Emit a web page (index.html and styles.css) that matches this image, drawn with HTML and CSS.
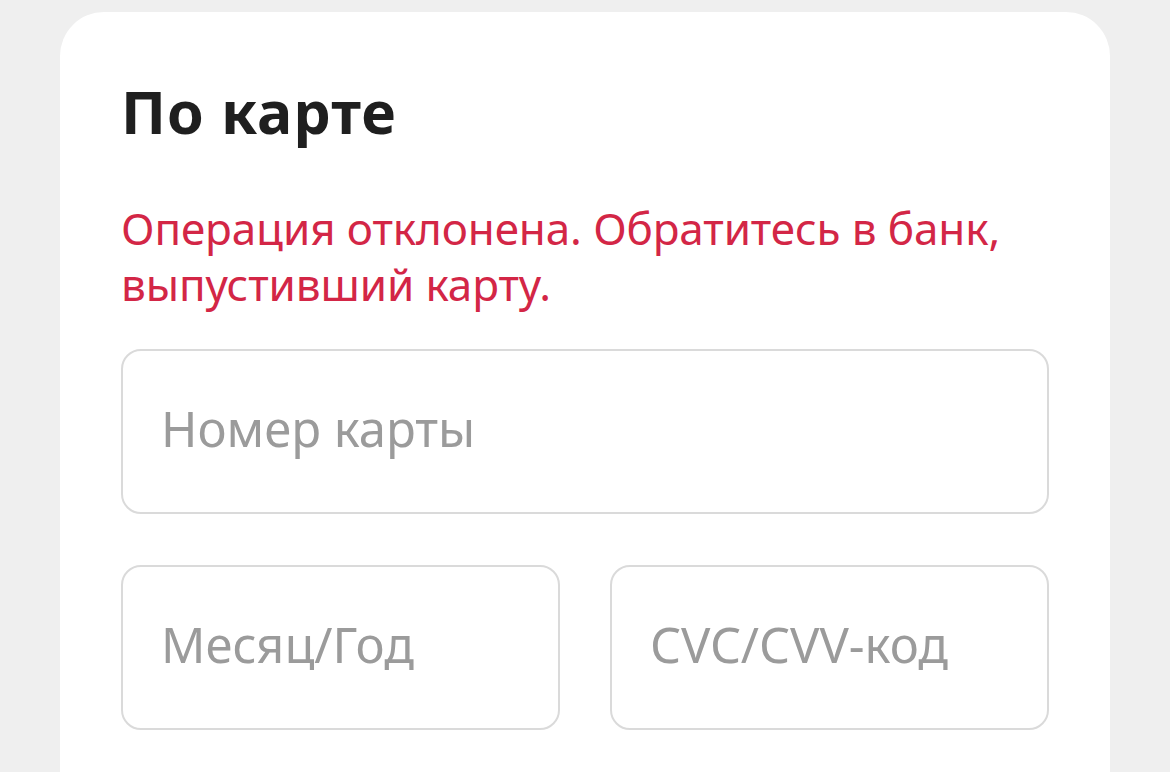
FILE: index.html
```html
<!DOCTYPE html>
<html lang="ru">
<head>
<meta charset="utf-8">
<link rel="stylesheet" href="styles.css">
</head>
<body>
<div class="card">
  <h1 class="title">По карте</h1>
  <p class="error">Операция отклонена. Обратитесь в банк, выпустивший карту.</p>
  <div class="field field-full"><span class="ph">Номер карты</span></div>
  <div class="row">
    <div class="field"><span class="ph">Месяц/Год</span></div>
    <div class="field"><span class="ph">CVC/CVV-код</span></div>
  </div>
</div>
</body>
</html>
```
FILE: styles.css
```css
html, body {
  margin: 0;
  padding: 0;
  background: #efefef;
  height: 100%;
  overflow: hidden;
}
body {
  font-family: "Noto Sans", "Open Sans", sans-serif;
}
.card {
  margin: 12px 0 0 60px;
  width: 1050px;
  box-sizing: border-box;
  height: 900px;
  background: #fff;
  border-radius: 44px;
  padding: 64px 61px 0 61px;
}
.title {
  margin: 0;
  font-size: 59px;
  line-height: 70px;
  font-weight: 700;
  letter-spacing: 1px;
  color: #1f1f1f;
}
.error {
  margin: 54px 0 0;
  font-size: 44px;
  line-height: 56px;
  letter-spacing: -0.1px;
  color: #d32646;
}
.field {
  box-sizing: border-box;
  height: 165px;
  border: 2px solid #dadada;
  border-radius: 20px;
  display: flex;
  align-items: center;
  padding: 0 0 7px 38px;
}
.field-full {
  margin-top: 37px;
}
.ph {
  font-size: 49px;
  color: #9b9b9b;
}
.row {
  display: grid;
  grid-template-columns: 1fr 1fr;
  gap: 50px;
  margin-top: 51px;
}
```
